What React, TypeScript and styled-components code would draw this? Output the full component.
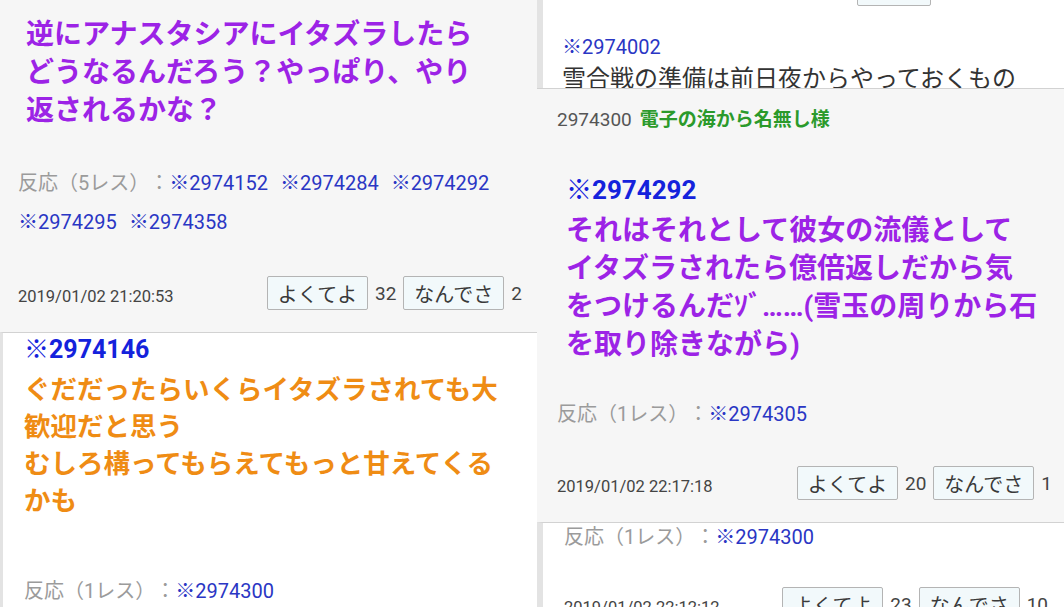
import styled, { createGlobalStyle } from 'styled-components';

const GlobalStyle = createGlobalStyle`
  html, body {
    margin: 0;
    padding: 0;
    background: #ffffff;
    font-family: Roboto, "Noto Sans CJK JP", "Noto Sans", sans-serif;
    text-spacing-trim: space-all;
  }
`;

const Page = styled.main`
  display: grid;
  grid-template-columns: 537px 527px;
  height: 607px;
  overflow: hidden;
`;

const Column = styled.div`
  display: flex;
  flex-direction: column;
  min-height: 0;
  overflow: hidden;
`;

const Card = styled.section<{ $tone: 'gray' | 'white'; $h?: number; $strip?: number; $pad: string; $top?: boolean }>`
  flex: ${(p) => (p.$h ? `0 0 ${p.$h}px` : '1 1 auto')};
  box-sizing: border-box;
  overflow: hidden;
  padding: ${(p) => p.$pad};
  background: ${(p) => (p.$tone === 'gray' ? '#f6f6f6' : '#ffffff')};
  border-top: ${(p) => (p.$top ? '1px solid #d2d2d2' : 'none')};
  border-left: ${(p) => (p.$strip ? `${p.$strip}px solid #e3e3e3` : 'none')};
`;

const Message = styled.p<{ $color: string; $size: number; $lh: number; $mt?: number; $indent?: number; $bold?: boolean }>`
  margin: ${(p) => p.$mt ?? 0}px 0 0 ${(p) => p.$indent ?? 0}px;
  color: ${(p) => p.$color};
  font-size: ${(p) => p.$size}px;
  line-height: ${(p) => p.$lh}px;
  font-weight: ${(p) => (p.$bold === false ? 400 : 700)};
  white-space: nowrap;
`;

const Anchor = styled.div<{ $size: number; $lh: number; $mt?: number; $indent?: number; $bold?: boolean }>`
  margin: ${(p) => p.$mt ?? 0}px 0 0 ${(p) => p.$indent ?? 0}px;
  color: ${(p) => (p.$bold ? '#1422dc' : '#2a36c4')};
  font-size: ${(p) => p.$size}px;
  line-height: ${(p) => p.$lh}px;
  font-weight: ${(p) => (p.$bold ? 700 : 400)};
`;

const Replies = styled.div<{ $mt: number; $lh?: number }>`
  margin-top: ${(p) => p.$mt}px;
  font-size: 20px;
  line-height: ${(p) => p.$lh ?? 39}px;
  color: #9b9b9b;
`;

const ReplyLink = styled.span`
  display: inline-block;
  color: #2a36c4;
  margin-right: 12px;
  white-space: nowrap;
`;

const Footer = styled.div<{ $mt: number }>`
  display: flex;
  justify-content: space-between;
  align-items: center;
  margin-top: ${(p) => p.$mt}px;
`;

const Stamp = styled.span`
  padding-top: 7px;
  font-size: 16.5px;
  color: #444;
`;

const Votes = styled.div`
  display: flex;
  align-items: center;
  gap: 7px;
`;

const VoteButton = styled.span<{ $w?: number }>`
  box-sizing: border-box;
  width: ${(p) => p.$w ?? 101}px;
  height: 34px;
  display: inline-flex;
  align-items: center;
  justify-content: center;
  border: 1px solid #b4b4b4;
  border-radius: 2px;
  background: #f2f9fb;
  color: #3a3a3a;
  font-size: 20px;
`;

const Count = styled.span`
  font-size: 19px;
  color: #444;
`;

const CutRow = styled.div`
  margin-top: -28px;
  padding-left: 295px;
  height: 34px;
`;

const Header = styled.div`
  display: flex;
  align-items: baseline;
  gap: 8px;
  line-height: 30px;
`;

const PostNo = styled.span`
  font-size: 19px;
  color: #555;
`;

const PostName = styled.span`
  font-size: 19px;
  font-weight: 700;
  color: #2b9a2b;
`;

const purple = '#9c23e6';
const orange = '#ef8c14';

function Vote({ good, bad }: { good: number; bad: number }) {
  return (
    <Votes>
      <VoteButton>よくてよ</VoteButton>
      <Count>{good}</Count>
      <VoteButton>なんでさ</VoteButton>
      <Count>{bad}</Count>
    </Votes>
  );
}

function ReplyList({ count, ids, mt, lh }: { count: number; ids: string[]; mt: number; lh?: number }) {
  return (
    <Replies $mt={mt} $lh={lh}>
      反応（{count}レス）：
      {ids.map((id) => (
        <ReplyLink key={id}>※{id}</ReplyLink>
      ))}
    </Replies>
  );
}

export default function App() {
  return (
    <>
      <GlobalStyle />
      <Page>
        <Column>
          <Card $tone="gray" $h={332} $pad="16px 15px 0 18px">
            <Message $color={purple} $size={28} $lh={38} $indent={8}>
              逆にアナスタシアにイタズラしたら
              <br />
              どうなるんだろう？やっぱり、やり
              <br />
              返されるかな？
            </Message>
            <ReplyList count={5} ids={['2974152', '2974284', '2974292', '2974295', '2974358']} mt={34} />
            <Footer $mt={34}>
              <Stamp>2019/01/02 21:20:53</Stamp>
              <Vote good={32} bad={2} />
            </Footer>
          </Card>
          <Card $tone="white" $top $strip={3} $pad="0 15px 0 21px">
            <Anchor $bold $size={25} $lh={34}>
              ※2974146
            </Anchor>
            <Message $color={orange} $size={26.5} $lh={37} $mt={4}>
              ぐだだったらいくらイタズラされても大
              <br />
              歓迎だと思う
              <br />
              むしろ構ってもらえてもっと甘えてくる
              <br />
              かも
            </Message>
            <ReplyList count={1} ids={['2974300']} mt={53} />
          </Card>
        </Column>
        <Column>
          <Card $tone="white" $h={88} $strip={6} $pad="0 0 0 19px">
            <CutRow>
              <VoteButton $w={74} />
            </CutRow>
            <Anchor $size={20} $lh={30} $mt={26}>
              ※2974002
            </Anchor>
            <Message $color="#333" $size={24} $lh={34} $bold={false}>
              雪合戦の準備は前日夜からやっておくもの
            </Message>
          </Card>
          <Card $tone="gray" $top $h={434} $pad="16px 12px 0 20px">
            <Header>
              <PostNo>2974300</PostNo>
              <PostName>電子の海から名無し様</PostName>
            </Header>
            <Anchor $bold $size={26} $lh={36} $mt={37} $indent={9}>
              ※2974292
            </Anchor>
            <Message $color={purple} $size={28} $lh={38} $mt={4} $indent={9}>
              それはそれとして彼女の流儀として
              <br />
              イタズラされたら億倍返しだから気
              <br />
              をつけるんだｿﾞ……(雪玉の周りから石
              <br />
              を取り除きながら)
            </Message>
            <ReplyList count={1} ids={['2974305']} mt={31} />
            <Footer $mt={32}>
              <Stamp>2019/01/02 22:17:18</Stamp>
              <Vote good={20} bad={1} />
            </Footer>
          </Card>
          <Card $tone="white" $top $strip={6} $pad="0 16px 0 21px">
            <ReplyList count={1} ids={['2974300']} mt={0} lh={28} />
            <Footer $mt={36}>
              <Stamp>2019/01/02 22:12:12</Stamp>
              <Vote good={23} bad={10} />
            </Footer>
          </Card>
        </Column>
      </Page>
    </>
  );
}
